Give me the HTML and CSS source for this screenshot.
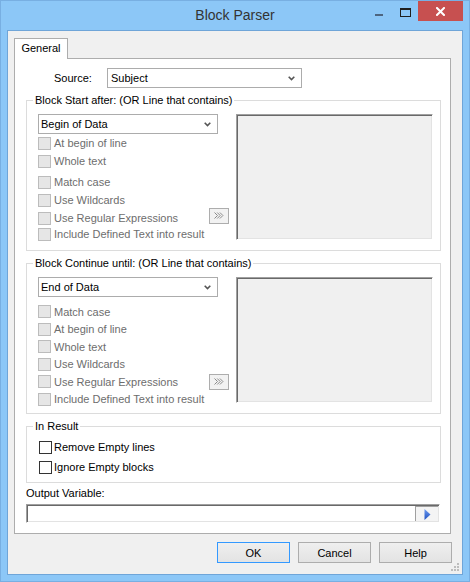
FILE: index.html
```html
<!DOCTYPE html>
<html>
<head>
<meta charset="utf-8">
<title>Block Parser</title>
<link rel="stylesheet" href="styles.css">
</head>
<body>
<div class="window">
  <div class="titlebar">
    <div class="title">Block Parser</div>
    <div class="controls">
      <span class="ctl ctl-min"><svg width="8" height="2" viewBox="0 0 8 2"><rect x="0" y="0" width="8" height="2" fill="#4d6580"/></svg></span>
      <span class="ctl ctl-max"><svg width="11" height="9" viewBox="0 0 11 9"><rect x="0.5" y="1" width="10" height="7.5" fill="none" stroke="#1f1f1f" stroke-width="1"/><rect x="0" y="0" width="11" height="2" fill="#1f1f1f"/></svg></span>
      <span class="ctl ctl-close"><svg width="9" height="9" viewBox="0 0 9 9"><path d="M1 1 L8 8 M8 1 L1 8" stroke="#fff" stroke-width="2" stroke-linecap="square"/></svg></span>
    </div>
  </div>

  <div class="client">
    <div class="tabs"><div class="tab">General</div></div>

    <div class="panel">
      <div class="source-row">
        <span class="source-label">Source:</span>
        <div class="combo combo-source">
          <span class="combo-text">Subject</span>
          <svg class="chev" width="7" height="5" viewBox="0 0 7 5"><polyline points="0.7,0.7 3.5,3.5 6.3,0.7" fill="none" stroke="#555" stroke-width="1.6"/></svg>
        </div>
      </div>

      <fieldset class="group group-start">
        <legend>Block Start after: (OR Line that contains)</legend>
        <div class="group-body">
          <div class="left-col">
            <div class="combo combo-inner">
              <span class="combo-text">Begin of Data</span>
              <svg class="chev" width="7" height="5" viewBox="0 0 7 5"><polyline points="0.7,0.7 3.5,3.5 6.3,0.7" fill="none" stroke="#555" stroke-width="1.6"/></svg>
            </div>
            <div class="row"><span class="cb cb-off"></span><span class="cb-label off">At begin of line</span></div>
            <div class="row"><span class="cb cb-off"></span><span class="cb-label off">Whole text</span></div>
            <div class="row row-gap3"><span class="cb cb-off"></span><span class="cb-label off">Match case</span></div>
            <div class="row"><span class="cb cb-off"></span><span class="cb-label off">Use Wildcards</span></div>
            <div class="row"><span class="cb cb-off"></span><span class="cb-label off">Use Regular Expressions</span>
              <span class="more-btn more-start"><svg width="10" height="7" viewBox="0 0 10 7"><polyline points="0.5,0.5 3.5,3.5 0.5,6.5" fill="none" stroke="#8a8a8a"/><polyline points="3.2,0.5 6.2,3.5 3.2,6.5" fill="none" stroke="#8a8a8a"/><polyline points="5.9,0.5 8.9,3.5 5.9,6.5" fill="none" stroke="#8a8a8a"/></svg></span>
            </div>
            <div class="row row-back2"><span class="cb cb-off"></span><span class="cb-label off">Include Defined Text into result</span></div>
          </div>
          <div class="listbox"></div>
        </div>
      </fieldset>

      <fieldset class="group group-continue">
        <legend>Block Continue until: (OR Line that contains)</legend>
        <div class="group-body">
          <div class="left-col">
            <div class="combo combo-inner">
              <span class="combo-text">End of Data</span>
              <svg class="chev" width="7" height="5" viewBox="0 0 7 5"><polyline points="0.7,0.7 3.5,3.5 6.3,0.7" fill="none" stroke="#555" stroke-width="1.6"/></svg>
            </div>
            <div class="row row-first"><span class="cb cb-off"></span><span class="cb-label off">Match case</span></div>
            <div class="row"><span class="cb cb-off"></span><span class="cb-label off">At begin of line</span></div>
            <div class="row"><span class="cb cb-off"></span><span class="cb-label off">Whole text</span></div>
            <div class="row"><span class="cb cb-off"></span><span class="cb-label off">Use Wildcards</span></div>
            <div class="row"><span class="cb cb-off"></span><span class="cb-label off">Use Regular Expressions</span>
              <span class="more-btn"><svg width="10" height="7" viewBox="0 0 10 7"><polyline points="0.5,0.5 3.5,3.5 0.5,6.5" fill="none" stroke="#8a8a8a"/><polyline points="3.2,0.5 6.2,3.5 3.2,6.5" fill="none" stroke="#8a8a8a"/><polyline points="5.9,0.5 8.9,3.5 5.9,6.5" fill="none" stroke="#8a8a8a"/></svg></span>
            </div>
            <div class="row"><span class="cb cb-off"></span><span class="cb-label off">Include Defined Text into result</span></div>
          </div>
          <div class="listbox"></div>
        </div>
      </fieldset>

      <fieldset class="group group-result">
        <legend>In Result</legend>
        <div class="row row-result"><span class="cb cb-on"></span><span class="cb-label">Remove Empty lines</span></div>
        <div class="row row-result"><span class="cb cb-on"></span><span class="cb-label">Ignore Empty blocks</span></div>
      </fieldset>

      <div class="output-label">Output Variable:</div>
      <div class="edit">
        <span class="edit-btn"><svg width="7" height="11" viewBox="0 0 7 11"><defs><linearGradient id="tri" x1="0" y1="0" x2="0" y2="1"><stop offset="0" stop-color="#6f9cf0"/><stop offset="1" stop-color="#1f50c0"/></linearGradient></defs><polygon points="0.5,0 6.5,5.5 0.5,11" fill="url(#tri)"/></svg></span>
      </div>
    </div>

    <div class="buttons">
      <button class="btn btn-default">OK</button>
      <button class="btn">Cancel</button>
      <button class="btn">Help</button>
    </div>

    <svg class="grip" width="8" height="8" viewBox="0 0 8 8"><g fill="#bdbdbd"><rect x="6" y="0" width="2" height="2"/><rect x="3" y="3" width="2" height="2"/><rect x="6" y="3" width="2" height="2"/><rect x="0" y="6" width="2" height="2"/><rect x="3" y="6" width="2" height="2"/><rect x="6" y="6" width="2" height="2"/></g></svg>
  </div>
</div>
</body>
</html>
```

FILE: styles.css
```css
* { box-sizing: border-box; }

body {
  margin: 0;
  font-family: "Liberation Sans", Arial, sans-serif;
  font-size: 11px;
  color: #000;
}

.window {
  width: 470px;
  height: 582px;
  background: #8cc7f7;
  border: 1px solid #78afe2;
  display: flex;
  flex-direction: column;
}

/* ---------- title bar ---------- */
.titlebar {
  height: 29px;
  flex: none;
  display: grid;
  grid-template-columns: 1fr auto 1fr;
  align-items: center;
}
.title {
  grid-column: 2;
  font-size: 14px;
  color: #333;
  line-height: 29px;
}
.controls {
  grid-column: 3;
  justify-self: end;
  align-self: start;
  display: flex;
  margin-right: 6px;
}
.ctl {
  height: 20px;
  display: flex;
  align-items: center;
  justify-content: center;
}
.ctl-min { width: 26px; padding-top: 7px; }
.ctl-max { width: 26px; padding-top: 2px; }
.ctl-close { width: 45px; background: #c75050; }

/* ---------- client area ---------- */
.client {
  position: relative;
  flex: 1;
  margin: 0 6px 6px 6px;
  border: 1px solid #6fa5d8;
  background: #f0f0f0;
  padding: 7px 10px 0 6px;
}

.tabs { display: flex; }
.tab {
  position: relative;
  z-index: 1;
  width: 54px;
  height: 21px;
  margin-bottom: -1px;
  background: #fff;
  border: 1px solid #adadad;
  border-bottom: none;
  text-align: center;
  line-height: 19px;
}

.panel {
  width: 437px;
  height: 476px;
  background: #fff;
  border: 1px solid #adadad;
  padding-top: 9px;
}

/* ---------- source row ---------- */
.source-row {
  display: flex;
  align-items: center;
  padding-left: 39px;
}
.source-label { width: 53px; }

.combo {
  flex: none;
  height: 20px;
  border: 1px solid #acacac;
  background: #fff;
  display: flex;
  align-items: center;
  justify-content: space-between;
  padding-right: 6px;
}
.combo-source { width: 195px; padding-left: 3px; }
.combo-inner { width: 180px; padding-left: 2px; }
.chev { display: block; }

/* ---------- group boxes ---------- */
.group {
  margin: 5px 9px 0 11px;
  border: 1px solid #dcdcdc;
  padding: 7px 7px 10px 11px;
  min-width: 0;
}
.group legend {
  padding: 0 2px;
  margin-left: -5px;
  line-height: 14px;
}
.group-body {
  display: flex;
  gap: 7px;
  height: 126px;
}
.left-col {
  width: 191px;
  display: flex;
  flex-direction: column;
}
.left-col > * { flex: none; }
.listbox {
  flex: 1;
  background: #f0f0f0;
  border: 1px solid;
  border-color: #a0a0a0 #fff #fff #a0a0a0;
  box-shadow: inset 1px 1px 0 #696969, inset -1px -1px 0 #e3e3e3;
}

.row {
  flex: none;
  height: 18px;
  display: flex;
  align-items: center;
  white-space: nowrap;
}
.row-gap3 { margin-top: 3px; }
.row-back2 { margin-top: -2px; }

.group-continue .row { height: 17.5px; }
.group-continue .row-first { margin-top: 6px; }

.cb {
  flex: none;
  width: 13px;
  height: 13px;
  border: 1px solid #bcbcbc;
  background: #e6e6e6;
  margin-right: 3px;
}
.cb-on {
  border-color: #333;
  background: #fff;
  margin-right: 2px;
}
.cb-label { line-height: 14px; }
.cb-label.off { color: #6d6d6d; }

.more-btn {
  margin-left: auto;
  width: 20px;
  height: 16px;
  border: 1px solid #adadad;
  background: #f2f2f2;
  display: flex;
  align-items: center;
  justify-content: center;
}
.more-start { margin-top: -5px; }

.group-result {
  padding: 4px 7px 5px 12px;
}
.group-result legend { margin-left: -6px; }
.row-result { height: 20px; }

/* ---------- output variable ---------- */
.output-label {
  margin: 3px 0 0 11px;
  line-height: 14px;
}
.edit {
  margin: 4px 10px 0 11px;
  height: 19px;
  background: #fff;
  border: 1px solid;
  border-color: #a0a0a0 #fff #fff #a0a0a0;
  box-shadow: inset 1px 1px 0 #696969, inset -1px -1px 0 #e3e3e3;
  padding: 1px;
  display: flex;
  justify-content: flex-end;
}
.edit-btn {
  width: 23px;
  height: 15px;
  background: #f4f4f4;
  border-left: 1px solid #a0a0a0;
  border-top: 1px solid #a0a0a0;
  display: flex;
  align-items: center;
  justify-content: center;
}

/* ---------- dialog buttons ---------- */
.buttons {
  display: flex;
  justify-content: flex-end;
  gap: 8px;
  margin-top: 8px;
}
.btn {
  width: 73px;
  height: 21px;
  padding: 0;
  font-family: "Liberation Sans", Arial, sans-serif;
  font-size: 11px;
  color: #000;
  border: 1px solid #adadad;
  background: linear-gradient(#efefef, #e3e3e3);
}
.btn-default { border-color: #3399ff; }

.grip {
  position: absolute;
  right: 3px;
  bottom: 3px;
}
```
